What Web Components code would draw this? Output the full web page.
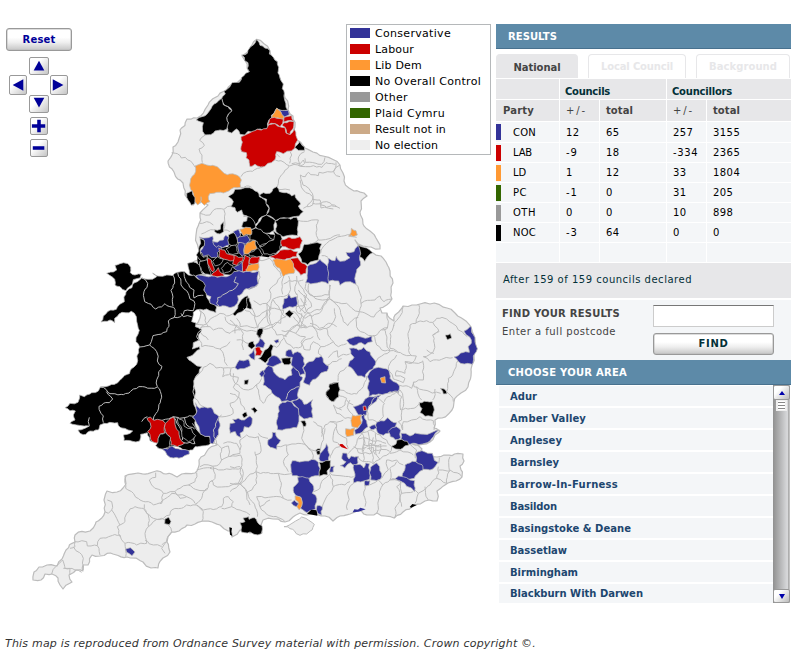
<!DOCTYPE html>
<html lang="en"><head><meta charset="utf-8"><title>Election results map</title>
<style>body{margin:0;background:#fff;font-family:Verdana,"DejaVu Sans",sans-serif;font-size:10px;color:#000}</style></head>
<body><election-page></election-page>
<script>
const define=(name,html,init)=>customElements.define(name,class extends HTMLElement{
  connectedCallback(){if(this.shadowRoot)return;this.attachShadow({mode:'open'}).innerHTML=typeof html==='function'?html(this):html;if(init)init(this)}
});
/* Text run tracked out to a given width. */
define('fit-text','<style>:host{display:inline-block;white-space:nowrap;line-height:1.2}</style><span><slot></slot></span>',el=>{
  const s=el.shadowRoot.querySelector('span'),w=+el.getAttribute('w'),n=el.textContent.length;
  if(w&&n){const m=s.getBoundingClientRect().width;s.style.letterSpacing=((w-m)/n)+'px'}
});
/* Gives long border segments a small natural kink; the offset depends only on the midpoint, so shared borders stay joined. */
const roughen=(d,min)=>d.replace(/M([^MZ]+)(Z?)/g,(_,body,z)=>{
  const v=body.match(/-?\d+(\.\d+)?/g).map(Number),p=[];
  for(let i=0;i<v.length;i+=2)p.push([v[i],v[i+1]]);
  if(z)p.push(p[0]);
  const split=(a,b)=>{
    const l=Math.hypot(a[0]-b[0],a[1]-b[1]);
    if(l<min)return [b];
    const x=(a[0]+b[0])/2,y=(a[1]+b[1])/2,h=Math.sin(x*12.9898+y*78.233)*43758.5453,t=(h-Math.floor(h))*6.283,r=Math.min(l*.13,min*.28);
    const m=[x+Math.cos(t)*r,y+Math.sin(t)*r];
    return [...split(a,m),...split(m,b)];
  };
  let out=[p[0]];
  for(let i=1;i<p.length;i++)out.push(...split(p[i-1],p[i]));
  return 'M'+out.map(q=>q[0].toFixed(1)+','+q[1].toFixed(1)).join(' ')+z;
});
define('push-button','<style>:host{display:flex;box-sizing:border-box;align-items:center;justify-content:center;border:1px solid #999;border-radius:3px;box-shadow:inset 0 0 0 .5px #bbb;background:linear-gradient(#fff 40%,#eee 65%,#c6c6c6);font-weight:bold}</style><slot></slot>');
define('icon-button',el=>{
  const p={up:'M9 3L15 14H3Z',down:'M3 2H15L9 13Z',left:'M3 9L15 2.5V15.5Z',right:'M2 2.5L14 9L2 15.5Z',plus:'M7 2h4v5h5v4h-5v5H7v-5H1V7h6Z',minus:'M2 7h13v4H2Z'}[el.getAttribute('icon')];
  return `<style>:host{display:block;box-sizing:border-box;border:1px solid #999;border-radius:2px;background:linear-gradient(135deg,#fff 35%,#c4c4c4)}svg{display:block;width:100%;height:100%}</style><svg viewBox="0 0 18 18"><path fill="#000099" d="${p}"/></svg>`});
define('map-controls',`<style>:host{display:block;width:66px}push-button{width:66px;height:23px;color:#009;font-size:10px}
.pad{display:grid;grid-template-columns:18px 23px 18px;grid-template-rows:18px 20px 18px;margin:6px 0 0 3px;align-items:center;justify-items:center}
.pad icon-button{width:18px;height:20px}.pad .v{grid-column:2;width:20px;height:18px}.pad .m{grid-row:2}.z{display:grid;gap:4px;margin:4px 0 0 24px}.z icon-button{width:18px;height:18px}</style>
<push-button><fit-text w="33">Reset</fit-text></push-button>
<div class="pad"><icon-button class="v" icon="up"></icon-button><icon-button class="m" style="grid-column:1" icon="left"></icon-button><icon-button class="m" style="grid-column:3" icon="right"></icon-button><icon-button class="v" style="grid-row:3" icon="down"></icon-button></div>
<div class="z"><icon-button icon="plus"></icon-button><icon-button icon="minus"></icon-button></div>`);
define('legend-item',el=>`<style>:host{display:flex;height:16px;align-items:center;gap:5px;font-size:11px}i{width:20px;height:10px;background:${el.getAttribute('color')}}slot{display:block;padding-top:2px}</style><i></i><slot></slot>`);
define('map-legend',`<style>:host{display:block;box-sizing:border-box;width:145px;height:131px;border:1px solid #b5b8ba;background:#fff;padding:0 0 0 3px}</style>
<legend-item color="#333399"><fit-text w="76">Conservative</fit-text></legend-item><legend-item color="#cc0000"><fit-text w="39">Labour</fit-text></legend-item><legend-item color="#ff9933"><fit-text w="47">Lib Dem</fit-text></legend-item><legend-item color="#000"><fit-text w="106">No Overall Control</fit-text></legend-item><legend-item color="#999"><fit-text w="33">Other</fit-text></legend-item><legend-item color="#336600"><fit-text w="70">Plaid Cymru</fit-text></legend-item><legend-item color="#ccaa88"><fit-text w="71">Result not in</fit-text></legend-item><legend-item color="#eee"><fit-text w="63">No election</fit-text></legend-item>`);
define('council-map',`<style>:host{display:block}svg{display:block}path{stroke:#bcbcbc;stroke-width:3;stroke-linejoin:round;fill:#ededed}.land{stroke-width:1.2}.k,.b,.r,.o{stroke-width:2.3}.k{fill:#000}.b{fill:#339}.r{fill:#c00}.o{fill:#f93}.s{stroke:none}.n{fill:none}</style>
<svg width="496" height="600" viewBox="0 0 496 600">
<path class="land" d="M256.7,39.3 270,51 277,62 280,78 284,93 288,110 293,116 295,127 297,140 305,148 313,152 323,156 332,159 340,165 343,173 344,181 349,188 354,191 364,193 367,196 361,201 360,212 363,224 370,231 376,238 380,245 380,249 371,247 363,246 355,240 358,245 364,248 373,253 381,256 386,262 390,271 393,283 392,299 380,308 382,313 387,313 394,321 395,315 403,306 412,305 420,304 430,304 447,308 455,313 463,319 471,327 475,340 477,349 474,356 472,365 471,376 468,387 461,393 454,402 452,410 442,418 435,420 434,428 440,431 435,435 430,442 412,444 422,449 420,452 437,457 444,455 463,454 464,461 460,466 462,477 456,481 448,483 437,491 437,501 425,501 413,506 403,512 394,518 385,516 377,513 371,515 358,510 350,514 340,516 333,521 325,516 307,515 300,513 293,517 285,522 273,519 263,520 262,533 250,533 240,530 232,537 231,531 220,525 212,522 203,521 195,524 187,525 179,531 172,532 167,542 170,552 163,558 158,568 151,568 143,562 127,557 113,554 100,556 92,555 88,565 83,565 83,571 76,570 69,575 72,582 63,589 58,578 52,574 45,574 41,580 33,580 34,572 39,567 47,565 57,566 62,559 66,550 75,542 75,535 90,531 96,522 105,512 104,500 107,491 117,492 123,488 126,484 125,476 138,473 153,472 166,474 177,477 195,473 199,460 207,451 217,445 213,440 204,441 191,420 185,410 188,390 188,330 200,318 190,268 199,258 196,235 200,213 208,205 201,200 193,205 185,195 183,183 174,172 168,161 172,155 173,147 178,142 180,130 187,119 197,118 208,105 218,96 232,84 249,72 242,56 250,48Z"/>
<g transform="translate(160 30) scale(.33333)">
<path class="k" d="M290,28 L300,46 314,54 330,62 328,72 340,82 352,95 356,112 360,145 370,162 367,176 373,190 374,210 383,240 358,240 350,235 342,250 334,256 336,265 327,270 322,282 325,295 308,300 292,298 275,306 264,304 254,315 240,313 230,297 215,309 203,305 200,290 205,278 200,263 207,250 216,242 205,230 194,226 185,205 196,192 192,184 210,170 216,158 238,157 245,142 268,125 262,115 264,98 254,92 253,82 245,75 262,70 272,50 280,45Z"/>
<path class="k" d="M185,205 190,224 204,230 216,242 205,252 200,263 205,278 200,298 180,300 165,303 152,314 135,315 127,290 130,278 109,270 126,260 148,243 162,222Z"/>
<path class="o" d="M350,235 360,241 372,260 370,268 334,267 342,250Z"/><path class="b" d="M356,240 385,241 388,254 374,261Z"/>
<path class="r" d="M328,268 343,262 370,268 368,280 360,290 345,281 322,285Z"/><path class="r" d="M372,262 395,257 402,275 371,276Z"/><path class="r" d="M372,278 402,275 400,295 395,300 390,315 380,310 375,292 366,286Z"/>
<path class="r" d="M243,320 254,316 270,308 292,298 320,296 326,284 345,281 365,292 375,293 378,309 390,314 402,297 408,317 413,330 406,342 405,354 394,363 370,371 350,365 345,389 334,398 324,400 305,412 285,403 270,410 267,390 258,383 259,368 245,365 243,350 247,336Z"/>
<path class="k" d="M419,335 427,347 433,350 434,361 415,361 404,352Z"/>
<path class="o" d="M105,408 126,400 140,405 158,406 182,420 202,434 232,436 244,450 242,472 215,476 190,489 170,487 149,491 145,500 150,515 133,526 123,516 113,525 105,515 100,490 92,478 91,455 97,438 107,424Z"/>
<path class="k" d="M80,490 97,482 105,503 104,521 94,526Z"/>
<path class="n" d="M35,368 52,371 64,384 76,382 97,399 106,412M136,315 119,331 133,346 117,357 126,375 127,398M119,522 123,500M243,440 260,425 292,415 307,409 M346,390 363,392 388,407 370,430 355,460 350,475 M389,400 395,375 391,366 M360,382 350,372 M389,408 414,405 420,408 434,400 430,390 419,402 395,401 M420,405 416,380 434,365 M435,385 436,397 485,403 495,382 M414,405 436,410 460,407 486,412 498,398 525,403 M528,397 520,425 477,427 475,437 452,434 446,427 436,440 421,435 429,465 457,490 457,510 440,530 M457,508 480,510 483,525 500,532 530,530"/>
<path class="n" d="M540,405 521,424 529,437 540,440M242,472 275,472"/>
</g>
<g transform="translate(160 180) scale(.33333)">
<path class="n" d="M120,100 150,105 170,86 192,88 240,75 M118,130 140,125 160,135 M192,90 190,150 210,155 M124,162 165,150 M190,148 170,160 M250,110 262,108M390,30 350,25 M420,0 430,30 458,50 458,75 430,85 M458,70 500,65 540,85 M480,68 483,84 520,87 M410,120 475,120 475,180 450,190 M475,180 540,165"/>
<path class="k s" d="M208,165 245,160 290,148 360,165 366,200 345,225 300,228 290,250 250,275 190,283 120,275 112,225 135,215 160,225 175,205 205,200Z"/>
<path class="k" d="M205,50 220,40 225,28 255,23 278,27 292,35 298,50 315,60 320,75 327,85 322,108 305,110 294,126 285,135 270,117 262,108 250,105 245,90 232,97 225,83 213,80 220,65Z"/>
<path class="k" d="M298,45 310,38 330,40 350,20 358,35 380,38 395,48 405,43 412,60 422,72 415,78 430,95 418,108 400,110 360,115 347,122 330,108 318,106 328,85 318,70 320,58Z"/>
<path class="k" d="M262,110 278,118 288,140 275,148 260,144 245,140 250,125 260,123Z"/><path class="k" d="M287,140 306,112 319,105 330,111 347,122 342,152 318,160Z"/><path class="k" d="M345,123 410,112 412,167 370,170 348,155Z"/>
<path class="k" d="M182,135 191,125 191,155 180,162 164,155 164,149 181,148Z"/>
<path class="k" d="M272,150 287,144 318,161 342,180 320,190 300,198 292,185 270,180Z"/><path class="k" d="M340,152 362,164 364,190 360,210 330,225 312,222 298,200 341,180Z"/>
<path class="b" d="M118,171 145,173 158,168 158,183 180,188 185,205 172,218 174,235 155,233 145,225 130,230 120,214 132,195 132,180Z"/>
<path class="b" d="M158,185 190,180 197,166 207,172 207,195 188,203 174,197 170,202Z"/><path class="b" d="M220,155 235,148 242,165 235,175 224,170Z"/><path class="b" d="M232,174 262,166 270,182 257,192 230,187Z"/><path class="b" d="M236,188 252,190 253,222 247,229 237,218Z"/>
<path class="o" d="M239,148 272,143 275,163 250,167Z"/><path class="o" d="M254,198 262,189 286,181 291,205 275,211 265,222 253,222Z"/>
<path class="k" d="M205,165 220,158 230,173 232,190 224,200 210,195Z"/><path class="k" d="M120,175 132,180 133,197 120,210 130,232 143,228 142,243 124,243 109,225 116,205Z"/><path class="k" d="M198,207 227,195 235,220 207,221Z"/><path class="k" d="M267,218 292,204 308,225 290,232 268,228Z"/>
<path class="r" d="M176,204 194,210 200,221 221,226 230,239 218,242 203,240 190,237 177,230Z"/><path class="r" d="M222,226 250,231 248,242 230,256 218,252Z"/><path class="r" d="M254,225 270,233 262,270 247,276 249,245Z"/><path class="r" d="M267,250 275,231 299,229 295,248 280,253Z"/>
<path class="b" d="M220,263 246,244 247,275 229,270Z"/><path class="o" d="M257,270 265,256 296,250 293,272 265,278Z"/>
<path class="k" d="M83,250 108,248 120,256 126,280 137,285 108,289 88,280Z"/><path class="k" d="M119,245 140,239 145,260 152,286 135,282 125,272Z"/><path class="k" d="M158,245 173,230 190,237 181,253 166,258Z"/><path class="r" d="M143,233 154,240 158,255 163,270 158,276 147,258Z"/><path class="k" d="M184,265 203,247 220,258 213,272 190,281Z"/><path class="r" d="M154,285 168,273 175,263 181,277 191,283 192,288Z"/>
<path class="b" d="M107,288 155,288 185,289 208,287 222,274 250,277 297,273 295,311 280,323 258,326 247,340 233,347 232,370 210,383 180,380 150,372 153,350 138,342 132,320Z"/>
<path class="n" d="M228,290 222,306 235,311 228,323 208,333 188,345 173,353 170,370 177,378"/>
<path class="r" d="M363,180 387,171 406,175 420,170 427,182 420,205 400,209 366,200Z"/><path class="r" d="M328,230 361,211 392,208 413,215 410,230 390,235 350,242Z"/><path class="r" d="M391,236 413,233 424,248 442,260 438,280 422,286 409,270 400,260Z"/><path class="o" d="M338,240 362,238 390,237 405,272 402,280 370,290 359,265 345,255Z"/>
<path class="k" d="M414,222 433,193 458,190 485,192 480,220 475,240 443,254 426,248Z"/>
<path class="b" d="M437,308 443,272 442,260 460,252 480,238 493,250 508,273 504,312 485,305Z"/>
<path class="k" d="M233,385 255,350 263,347 264,370 252,390 232,400 225,408 218,402Z"/><path class="k" d="M260,354 268,354 273,372 277,387 260,383Z"/><path class="k" d="M293,450 306,445 307,460 298,475 290,462Z"/>
<path class="n" d="M297,275 295,310 265,327 M295,240 328,235 342,258 360,275 364,290 350,310 328,330 332,355 320,370 M320,370 300,375 281,362 M371,290 368,343 M386,288 390,315 387,340 370,350 M410,288 405,320 410,345 M371,312 387,302 430,300 M415,305 440,345 430,378 410,380 M438,310 435,325 450,345 485,348 507,345 508,314 M430,375 455,410 478,400 507,350 M410,378 412,398 435,415 453,405 458,440 480,480 M422,355 440,375 M425,400 420,420 440,440 M320,370 335,385 372,395 M330,380 332,430 350,465 380,470 M320,370 318,410 293,445 M305,445 340,440 365,415 378,410 M400,410 418,435 407,460 435,470 M365,452 407,460 M218,402 200,408 180,400 163,410 130,435 100,430 M275,385 285,405 292,440 M195,410 205,430 230,435 225,460 M230,435 250,450 290,455 M130,435 120,455 145,480 M450,430 478,445 505,430 530,440"/>
</g>
<g transform="translate(50 250) scale(.33333)">
<path class="k" d="M170,70 190,66 200,60 195,46 210,41 234,41 242,52 241,68 255,75 274,73 270,84 250,89 247,103 228,122 210,110 195,105 194,88 179,76Z"/>
<path class="k" d="M228,126 246,113 252,99 275,84 293,88 320,80 308,69 338,79 367,77 383,67 404,65 415,75 432,75 450,90 466,107 461,120 468,130 480,160 500,171 498,188 470,177 430,187 428,203 425,215 438,219 436,230 455,238 446,254 448,270 430,278 427,297 448,290 450,298 435,308 411,322 430,339 455,350 447,370 436,382 431,408 435,435 432,465 440,490 428,502 437,510 441,540 455,552 479,560 482,580 455,588 435,590 428,600 412,605 398,598 370,588 357,598 322,594 326,580 300,572 292,548 272,553 269,573 222,572 220,555 248,543 234,540 210,532 203,518 163,520 150,525 145,540 120,543 108,553 90,550 84,540 107,534 118,528 80,525 60,520 75,510 70,495 76,483 45,473 60,460 84,457 89,435 103,440 125,428 145,423 151,411 175,408 210,390 238,371 260,343 269,290 258,275 264,253 268,241 260,214 259,200 244,184 216,187 194,205 194,218 180,210 153,216 174,184 199,178 223,155Z"/>
<path class="n" d="M276,83 293,100 282,125 284,155 317,177 345,161 371,172 372,204 M369,75 374,99 363,121 367,148 369,168 M372,203 355,213 350,245 309,257 299,285 270,291 M383,68 393,105 410,122 420,147 432,153 430,182 403,182 392,200 374,202 M402,67 409,96 432,120 432,144 460,136 M393,190 400,200 425,200 M299,285 320,305 322,333 336,349 326,365 322,410 M150,411 180,431 220,434 250,417 285,411 322,411 334,434 332,450 318,490 310,510 M169,425 188,447 178,458 147,469 153,490 160,498 160,518 M317,510 370,500 403,503 432,499 M292,500 275,515 M371,500 388,530 397,570 M384,502 398,535 402,528 M403,502 410,525 434,537 M427,520 455,555 M398,578 435,581 432,558 M118,502 118,527"/>
<path class="r" d="M291,505 301,501 311,511 337,511 347,520 345,549 330,553 326,580 314,578 302,568 293,544 303,530Z"/><path class="r" d="M346,520 370,501 375,523 387,545 390,565 404,579 382,590 363,585 359,559 347,545Z"/><path class="k" d="M331,552 346,548 362,563 360,589 340,598 317,587Z"/><path class="k" d="M381,501 398,510 402,528 424,536 437,557 415,575 396,561 396,538Z"/><path class="b" d="M337,598 366,588 417,602 418,612 397,622 370,624 351,615Z"/>
<path class="b" d="M436,458 449,475 464,471 483,472 507,500 506,553 490,582 480,579 479,559 451,552 440,520 428,501 441,483Z"/>
<path class="n" d="M436,382 460,352 480,340 498,354 520,354 543,354 570,350 M447,237 480,230 490,240 517,235 540,250 570,240 M455,238 440,260 455,290 490,290 510,297 540,275 M510,297 522,320 532,347 M543,355 542,378 565,382 550,412 568,427 560,450 540,460 550,490 508,500 M431,408 435,445 462,470 M453,184 475,230 M520,354 518,380 542,370 M506,553 490,582"/>
</g>
<g transform="translate(230 230) scale(.33333)">
<path class="b" d="M294,84 315,92 319,79 330,94 360,83 348,67 372,65 385,46 397,60 389,90 392,105 377,133 378,163 345,156 330,166 326,153 295,154Z"/>
<path class="k" d="M385,46 410,54 428,68 410,83 404,94 389,80Z"/>
<path class="o" d="M364,-5 378,2 382,15 356,19Z"/>
<path class="b" d="M702,303 722,288 725,307 735,323 737,343 742,356 730,378 727,403 703,402 672,381 692,369 718,367 714,350 724,340 719,321Z"/><path class="k" d="M646,315 661,311 665,324 652,329Z"/><path class="k" d="M631,475 643,477 651,491 640,492Z"/>
<path class="b" d="M350,331 375,320 397,322 426,318 427,335 405,345 394,338 380,344 370,347Z"/><path class="b" d="M358,355 385,360 401,352 420,366 430,385 438,395 428,418 413,426 405,443 383,438 354,409 372,382Z"/>
<path class="b" d="M412,440 433,415 445,412 477,421 480,445 509,467 505,490 480,485 445,492 417,500 412,474 418,453Z"/><path class="o" d="M451,444 465,440 467,459 455,458Z"/>
<path class="b" d="M132,332 145,328 147,336 138,340Z"/><path class="b" d="M76,345 90,325 105,340 100,354 79,355Z"/><path class="k" d="M82,300 98,294 97,310 92,325 80,313Z"/><path class="k" d="M55,340 70,334 76,348 65,357 54,349Z"/><path class="b" d="M56,375 73,355 75,375 74,390Z"/><path class="r" d="M75,355 90,351 97,365 91,377 76,378Z"/><path class="k" d="M85,386 104,361 122,342 130,348 126,380 106,399Z"/>
<path class="b" d="M109,403 125,378 140,379 155,397 141,404 118,410Z"/><path class="k" d="M155,385 183,382 184,400 163,404Z"/><path class="b" d="M168,364 184,359 189,373 203,365 213,370 222,384 224,403 218,413 225,432 210,436 205,425 183,403 187,382 167,377Z"/>
<path class="b" d="M97,425 115,407 125,410 138,434 165,449 186,435 183,420 190,410 205,423 210,438 218,442 210,470 205,482 205,505 180,515 155,515 149,505 123,480 99,465Z"/><path class="b" d="M88,432 99,421 104,431 95,442Z"/>
<path class="b" d="M219,414 237,395 250,393 258,382 274,378 280,396 295,407 291,424 273,429 248,449 239,466 220,457 226,440Z"/>
<path class="b" d="M15,413 28,390 55,388 61,407 42,416 23,419Z"/><path class="k" d="M43,451 56,449 53,463 43,463Z"/>
<path class="k" d="M288,486 300,477 300,462 322,458 328,475 328,498 313,514 288,495Z"/>
<path class="n" d="M168,508 182,480 208,470"/>
<path class="n" d="M272,70 290,40 345,17 380,22 M275,77 294,82 M378,163 390,190 393,220 435,210 450,198 462,215 486,207 M393,219 388,245 432,261 450,240 M388,245 382,260 385,300 M470,250 472,295 455,300 M385,300 430,318 445,310 472,293 M237,160 237,190 255,205 299,207 302,165 M300,207 350,220 388,245 M385,262 353,287 340,275 315,220 299,207 M298,208 270,240 232,250 215,280 212,294 240,288 270,300 290,295 317,260 313,235 M160,320 200,285 230,292 M161,322 170,340 190,355 215,350 224,330 250,320 M228,320 213,338 222,358 240,360 250,335 M250,335 272,350 265,370 275,378 M272,350 310,335 325,350 350,341 M310,335 294,315 290,295 M295,383 322,362 324,382 359,372 M290,407 307,395 335,386 M324,453 330,425 350,410 M410,438 400,470 380,492 355,490 328,480 M430,315 440,345 455,360 500,366 530,377 559,378 M438,395 455,378 480,364 470,335 460,295 M559,378 545,400 525,395 525,430 500,422 497,438 525,445 520,458 490,447 475,418 480,400 500,375 M492,285 480,310 480,355 503,365 M520,228 490,290 M566,223 568,250 558,280 540,285 538,300 535,345 545,377 M558,278 590,272 608,277 620,265 650,267 685,300 712,320 M608,277 627,305 608,315 610,365 580,380 600,395 610,390 668,383 M590,360 612,370 M578,392 580,450 550,457 552,470 580,480 632,490 M525,395 578,395 M683,393 668,435 655,445 650,485 670,515 M608,315 625,303 M505,465 545,475 552,455 M560,470 575,510 M615,477 608,510 M475,490 500,483 515,500 512,540"/>
<path class="n" d="M40,236 80,260 122,240 128,208 160,200 M0,270 40,310 40,360 M110,240 120,285 90,295 M120,285 152,280 161,240 M20,265 30,290 85,290 M130,210 165,260 192,245 210,268 195,290 165,318 M222,195 245,230 225,250 207,230 200,190 M205,180 228,215 210,245 M161,325 140,352 131,347 M20,330 55,340 M10,430 15,460 55,480 78,465 95,445 M0,490 30,505 45,540 M80,465 100,520 125,490"/>
<path class="b" d="M158,238 162,206 172,204 176,191 183,204 200,200 200,228 178,230Z"/><path class="k" d="M165,251 178,240 191,250 180,263Z"/>
</g>
<g transform="translate(230 370) scale(.33333)">
<path class="b" d="M0,160 15,158 8,148 43,150 60,138 67,146 66,160 56,173 43,170 40,184 30,190 33,203 20,196 16,185 0,190 -2,175Z"/><path class="k" d="M36,134 49,126 52,137 42,144Z"/><path class="k" d="M63,117 73,112 82,121 74,130Z"/>
<path class="b" d="M142,179 144,140 145,111 158,97 185,96 205,115 207,140 200,173Z"/><path class="b" d="M185,95 208,85 222,103 248,89 245,125 248,144 222,147 207,135 205,115Z"/><path class="k" d="M212,153 225,152 228,168 220,170Z"/>
<path class="b" d="M114,210 125,204 127,187 137,188 143,205 152,211 141,225 140,238 114,225Z"/>
<path class="b" d="M370,110 398,100 417,80 453,75 430,100 413,120 409,135 385,135Z"/><path class="r" d="M399,109 407,108 410,121 401,122Z"/><path class="o" d="M367,136 394,134 395,160 384,174 366,170Z"/><path class="o" d="M347,176 374,173 371,196 350,200Z"/><path class="b" d="M394,140 402,132 410,153 414,170 404,177 390,190 376,193 374,180 385,174 395,160Z"/>
<path class="b" d="M440,157 463,153 473,143 500,158 493,175 460,196 442,187Z"/><path class="b" d="M418,171 434,164 440,173 423,179Z"/><path class="b" d="M475,184 499,170 512,181 512,204 496,209 481,200Z"/><path class="b" d="M513,190 540,198 555,189 600,190 628,181 610,200 600,213 578,222 540,223 513,207Z"/><path class="k" d="M484,229 498,222 501,210 532,214 537,225 512,238Z"/>
<path class="b" d="M556,251 576,242 607,250 613,271 624,277 600,300 579,298 558,275Z"/><path class="b" d="M516,320 525,285 547,274 576,284 579,300 553,325 535,328Z"/><path class="b" d="M480,329 506,318 530,323 554,332 554,365 530,349 512,334Z"/>
<path class="r s" d="M325,223 337,222 354,238 335,232Z"/><path class="k" d="M257,240 272,236 272,254 262,254Z"/><path class="b" d="M267,265 280,240 289,221 294,242 299,255 296,273 270,273Z"/>
<path class="b" d="M187,272 225,273 246,268 265,277 267,317 238,324 232,333 212,323 187,317Z"/><path class="k" d="M267,277 302,272 301,292 291,303 293,315 268,319Z"/><path class="b" d="M302,290 313,288 310,306 299,307Z"/>
<path class="b" d="M338,249 351,250 357,267 364,258 385,259 384,279 373,288 361,278 344,294 330,287 348,275 335,265Z"/>
<path class="b" d="M371,283 390,283 401,294 407,279 418,281 419,328 405,332 371,339Z"/><path class="b" d="M422,291 440,279 449,290 452,327 422,330Z"/><path class="b" d="M405,331 420,332 417,346 405,348Z"/>
<path class="b" d="M190,352 205,336 203,322 236,324 240,336 251,350 247,370 257,376 256,418 231,428 210,414 216,396 213,382 198,377 191,367Z"/><path class="o" d="M195,378 211,381 217,398 208,420 201,411 205,396 196,390Z"/><path class="b" d="M184,399 193,391 206,401 199,410Z"/><path class="k s" d="M231,431 244,419 261,421 262,437Z"/><path class="b" d="M261,407 277,410 275,436 263,430Z"/>
<path class="b s" d="M368,427 373,418 384,419 391,413 407,418 386,425Z"/><path class="k s" d="M539,411 547,402 560,405 544,413Z"/>
<path class="k" d="M30,458 45,455 39,444 56,440 57,448 73,443 82,456 96,467 94,491 72,493 60,486 34,486Z"/><path class="k" d="M567,98 583,94 607,95 613,120 609,140 585,139 570,128 576,116Z"/><path class="k" d="M288,67 299,57 298,42 325,37 330,58 326,81 310,95 288,75Z"/>
<path d="M162,470 186,460 215,441 235,450 253,463 247,479 230,492 210,496 188,478Z"/>
<path class="n" d="M355,250 380,220 404,180 M393,190 420,180 450,195 470,210 485,230 478,250 450,268 430,282 400,275 383,260 M371,230 395,237 420,220 440,230 470,228 M396,190 405,220 400,275 M414,185 417,225 430,280 M436,190 437,240 450,268 M385,207 415,207 452,214 468,220 M376,232 385,248 420,252 436,240 479,244 M400,206 397,245 M430,202 425,250 M404,225 453,223 447,252 M412,236 430,232 436,254"/>
<path class="n" d="M335,120 310,105 320,130 345,145 366,145 M325,115 345,105 350,85 330,78 M360,90 352,113 370,135 M350,90 370,105 M410,120 415,150 440,155 M415,110 440,80 463,100 460,140 445,155 M463,95 510,60 520,110 515,150 505,155 M515,120 560,110 570,98 M545,150 520,155 518,180 M505,155 518,180 M545,150 570,140 610,152 612,180 M275,190 285,165 300,155 320,165 324,190 350,205 355,235 M300,155 340,150 M220,170 215,205 245,240 272,240 M272,235 285,175 M320,160 310,215 330,225 M330,230 310,240 300,265 M250,155 275,170 275,200 M141,229 165,225 215,221 245,243 248,270 M75,255 90,250 85,200 50,195 30,210 30,250 0,260 M85,190 114,205 M75,245 78,305 145,310 187,310 M170,226 175,255 160,275 175,305 M0,290 30,290 40,310 30,340 0,340 M30,345 78,305 M30,340 45,355 80,420 82,440 M30,340 0,365 M78,305 80,340 50,370 M145,310 150,360 160,385 80,380 M160,385 185,390 M80,380 95,420 130,440 165,455 M90,410 120,390 M251,365 270,355 278,330 300,310 330,317 371,320 M300,315 310,350 285,390 277,410 M310,350 345,345 360,335 M371,340 355,360 352,420 M405,345 405,410 M419,345 445,330 458,345 440,430 M458,345 480,330 513,335 515,370 550,365 M515,370 495,415 494,445 M513,335 500,350 515,410 M555,360 565,370 555,400 M565,370 600,345 620,325 625,290 M585,350 595,390 M620,325 650,340 660,300 695,320 M626,280 628,263 M660,260 658,300 M625,300 660,303 M540,223 560,240 556,265 M470,270 500,270 520,285 M480,250 510,240 550,255 M470,270 475,300 455,325 M480,330 480,295 500,275"/>
</g>
<g transform="translate(20 410) scale(.33333)">
<path class="n" d="M320,195 317,235 335,245 360,270 385,275 400,285 425,280 430,250 395,225 388,210 407,202 407,188 M430,250 465,245 480,235 505,225 525,215 530,188 M505,225 520,235 560,240 570,215 585,205 580,170 530,180 M465,245 480,265 500,260 525,280 M525,283 545,265 560,235 M575,210 580,225 625,230 655,220 665,200 662,175 M540,170 595,165 605,150 605,115 590,100 M605,150 625,140 662,135 662,175 570,175 M605,115 625,108 625,140 M420,282 455,250 500,260 M373,283 380,310 400,325 430,325 450,315 455,300 500,285 530,285 550,305 545,335 M530,285 550,300 605,290 610,265 625,260 640,275 635,290 660,300 690,315 M605,295 635,290 M655,220 680,250 690,285 M262,270 275,275 275,300 265,310 255,305 M275,300 290,325 300,345 292,350 300,380 M300,345 315,335 320,310 345,290 370,295 387,325 385,350 375,370 380,400 M385,350 400,335 425,325 435,330 M445,345 455,365 440,395 425,405 M380,400 350,405 315,400 300,375 240,385 232,407 240,435 M315,400 317,440 M375,390 400,405 425,410 M440,395 425,415 435,430 M165,395 200,395 202,408 232,407 M150,415 165,410 165,395 M160,410 190,445 190,480 M128,450 135,475 150,475 150,495 M95,492 128,450 M130,475 165,480 185,487 M590,105 580,60 605,15 M660,120 650,100 610,100"/>
<path class="k" d="M435,327 446,322 453,335 448,344 434,341Z"/><path class="b" d="M317,417 331,413 345,426 336,437 320,427Z"/><path class="k s" d="M628,352 636,354 634,365 637,378 630,374Z"/>
</g></svg>`,el=>{
  for(const p of el.shadowRoot.querySelectorAll('path'))p.setAttribute('d',roughen(p.getAttribute('d'),p.matches('.land')?6:p.matches('.s')?40:15));
});
define('bar-title','<style>:host{display:flex;align-items:center;box-sizing:border-box;height:25px;background:#5d8aa8;border-bottom:1px solid #48718e;color:#fff;font-weight:bold;padding:1px 0 0 12px}</style><slot></slot>');
define('result-tabs',`<style>:host{display:grid;grid-template-columns:82px 98px 94px;column-gap:10px;height:24px;margin:5px 0 1px;font-weight:bold}div{box-sizing:border-box;display:flex;align-items:center;justify-content:center;border:1px solid #e7e7e9;border-bottom:0;border-radius:4px 4px 0 0;color:#e7e7e9}.on{background:#e7e7e9;color:#444;padding-top:2px}</style><div class="on"><fit-text w="47">National</fit-text></div><div><fit-text w="72">Local Council</fit-text></div><div><fit-text w="68">Background</fit-text></div>`);
define('results-table',()=>{
 const rows=[['CON','12','65','257','3155','#339',23],['LAB','-9','18','-334','2365','#c00',19],['LD','1','12','33','1804','#f93',13],['PC','-1','0','31','205','#360',14],['OTH','0','0','10','898','#999',23],['NOC','-3','64','0','0','#000',23],['','','','','','',0]];
 const num=t=>`<span class="c">${t?`<fit-text w="${t.length*6.8-(t[0]=='-'?2:0)}">${t}</fit-text>`:''}</span>`;
 return `<style>:host{display:grid;grid-template-columns:63px 39px 66px 39px 84px;gap:1px;grid-template-rows:20px 21px 20px repeat(6,19px);background:#fff}.c{background:#f4f6f8;padding:1px 0 0 6px;display:flex;align-items:center}.h{background:#e7e7e9;color:#444;font-weight:bold}.t{color:#033038;padding-left:5px;padding-top:5px}.w{grid-column:span 2}.p{padding:0;gap:12px}.p fit-text{padding-top:1px}.p i{width:5px;height:16px}.l{font-weight:normal}</style>
 <span class="c h"></span><span class="c h t w"><fit-text w="45">Councils</fit-text></span><span class="c h t w"><fit-text w="60">Councillors</fit-text></span>
 <span class="c h" style="padding-left:7px"><fit-text w="31">Party</fit-text></span><span class="c h l"><fit-text w="21">+/-</fit-text></span><span class="c h"><fit-text w="27">total</fit-text></span><span class="c h l"><fit-text w="21">+/-</fit-text></span><span class="c h"><fit-text w="27">total</fit-text></span>`
 +rows.map(r=>`<span class="c p"><i style="background:${r[5]}"></i><fit-text w="${r[6]}">${r[0]}</fit-text></span>`+r.slice(1,5).map(num).join('')).join('')});
define('postcode-form',`<style>:host{display:flex;box-sizing:border-box;height:60px;margin-top:2px;background:#f4f6f8;padding:5px 17px 0 6px;justify-content:space-between;color:#444}b,span{display:block}b{margin:3px 0 6px}.r{width:121px}input{display:block;box-sizing:border-box;width:121px;height:22px;border:1px solid #ccc;border-top-color:#777;background:#fff;margin:0 0 6px;padding:0}push-button{height:22px;color:#033038}</style><div><b><fit-text w="118">FIND YOUR RESULTS</fit-text></b><span><fit-text w="114">Enter a full postcode</fit-text></span></div><div class="r"><input aria-label="Postcode"><push-button><fit-text w="30">FIND</fit-text></push-button></div>`);
define('scroll-bar',`<style>:host{display:grid;box-sizing:border-box;grid-template-rows:15px 11px 1fr 14px;justify-items:center;width:17px;height:218px;background:linear-gradient(90deg,#909090,#d9dadc 85%,#aaa 90%,#ccc)}.b{box-sizing:border-box;width:17px;border:1px solid #999;border-radius:2px;background:linear-gradient(135deg,#fff 30%,#bbb);display:grid;place-items:center}svg{display:block}.t{box-sizing:border-box;width:11px;height:11px;border:2px solid #eee;border-width:1px 2px;background:repeating-linear-gradient(#fff 0 1px,#888 1px 2px,#fff 2px 3px)}.d{grid-row:4}</style><div class="b"><svg width="6" height="4"><path fill="#00a" d="M3 0L6 4H0Z"/></svg></div><div class="t"></div><div class="b d"><svg width="6" height="5"><path fill="#00a" d="M0 0H6L3 5Z"/></svg></div>`);
define('area-list',()=>`<style>:host{display:grid;grid-template-columns:274px 17px;height:218px;margin-left:3px}ul{list-style:none;margin:0;padding:1px 0 0;height:217px;overflow:hidden}li{box-sizing:border-box;height:20px;margin-bottom:2px;background:#f4f6f8;padding:1px 0 0 11px;color:#1d466f;font-weight:bold;display:flex;align-items:center}li:last-child{height:19px;margin:0}</style><ul>${[['Adur',27],['Amber Valley',76],['Anglesey',52],['Barnsley',49],['Barrow-In-Furness',108],['Basildon',47],['Basingstoke &amp; Deane',121],['Bassetlaw',57],['Birmingham',68],['Blackburn With Darwen',133]].map(a=>`<li><fit-text w="${a[1]}">${a[0]}</fit-text></li>`).join('')}</ul><scroll-bar></scroll-bar>`);
define('results-panel',`<style>:host{display:block;width:295px}.after{box-sizing:border-box;background:#e7e7e9;height:35px;margin-top:1px;display:flex;align-items:center;padding:0 0 1px 7px;color:#033038}</style><bar-title><fit-text w="49">RESULTS</fit-text></bar-title><result-tabs></result-tabs><results-table></results-table><div class="after"><fit-text w="189">After 159 of 159 councils declared</fit-text></div><postcode-form></postcode-form><bar-title><fit-text w="119">CHOOSE YOUR AREA</fit-text></bar-title><area-list></area-list>`);
define('election-page',`<style>:host{display:grid;grid-template-columns:496px 295px;grid-template-rows:636px 24px;width:802px;height:660px;overflow:hidden}.m{display:grid;justify-items:start;align-items:start}.m>*{grid-area:1/1}map-controls{margin:28px 0 0 6px}map-legend{margin:24px 0 0 346px}results-panel{margin-top:24px}footer{grid-column:1/3;padding:1px 0 0 5px;font-size:11px;font-style:italic;color:#333}</style><div class="m"><council-map></council-map><map-controls></map-controls><map-legend></map-legend></div><results-panel></results-panel><footer><fit-text w="531">This map is reproduced from Ordnance Survey material with permission. Crown copyright ©.</fit-text></footer>`);
</script></body></html>
